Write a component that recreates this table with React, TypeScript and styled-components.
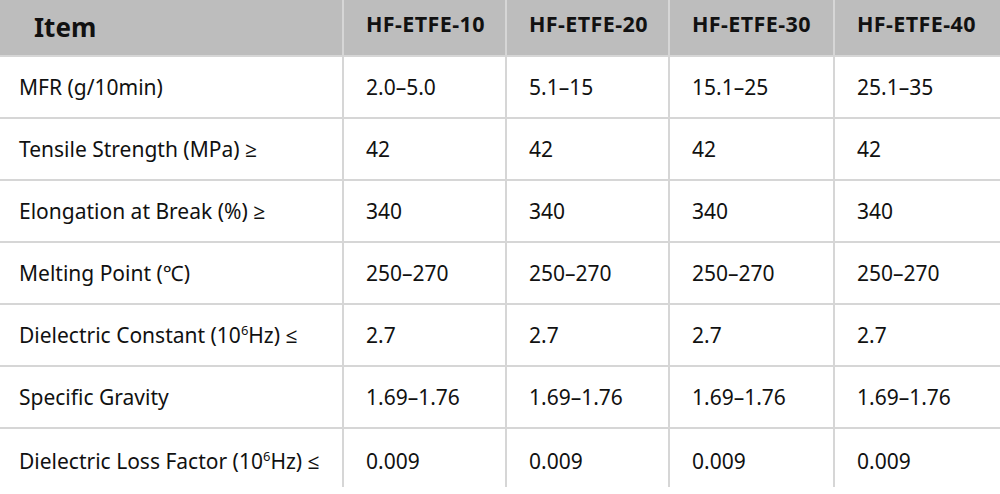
import React from 'react';
import styled, {createGlobalStyle} from 'styled-components';

const GlobalStyle = createGlobalStyle`
  html, body {
    margin: 0;
    padding: 0;
    background: #ffffff;
  }
`;

const Table = styled.div`
  display: grid;
  grid-template-columns: 344px 163px 163px 165px 1fr;
  grid-template-rows: 57px repeat(6, 62px) 65px;
  width: 1000px;
  height: 494px;
  overflow: hidden;
  font-family: 'Noto Sans', 'Open Sans', sans-serif;
  color: #111111;
  background: #ffffff;
`;

const HeadCell = styled.div<{$first?: boolean; $last?: boolean}>`
  display: flex;
  align-items: center;
  box-sizing: border-box;
  background: #bdbdbd;
  border-bottom: 2px solid #d6d6d6;
  border-right: ${p => (p.$last ? 'none' : '2px solid #d6d6d6')};
  padding-left: ${p => (p.$first ? '34px' : '22px')};
  padding-bottom: ${p => (p.$first ? '2px' : '8px')};
  font-weight: 700;
  font-size: ${p => (p.$first ? '26px' : '21.5px')};
  letter-spacing: ${p => (p.$first ? '0' : '0.4px')};
  color: #111111;
  white-space: nowrap;
`;

const Cell = styled.div<{$first?: boolean; $last?: boolean; $end?: boolean}>`
  display: flex;
  align-items: center;
  box-sizing: border-box;
  border-bottom: ${p => (p.$end ? 'none' : '2px solid #d6d6d6')};
  border-right: ${p => (p.$last ? 'none' : '2px solid #d6d6d6')};
  padding-left: ${p => (p.$first ? '19px' : '22px')};
  padding-top: ${p => (p.$end ? '6px' : '0')};
  margin-bottom: ${p => (p.$end ? '7px' : '0')};
  font-size: 21px;
  white-space: nowrap;
`;

const Label = styled.span`
  white-space: nowrap;
`;

const Sup = styled.span`
  display: inline-block;
  font-size: 13px;
  line-height: 1;
  vertical-align: baseline;
  position: relative;
  top: -8px;
`;

const headers = ['HF-ETFE-10', 'HF-ETFE-20', 'HF-ETFE-30', 'HF-ETFE-40'];

const rows: {label: React.ReactNode; value: string}[] = [
  {label: 'MFR (g/10min)', value: ''},
  {label: 'Tensile Strength (MPa) ≥', value: '42'},
  {label: 'Elongation at Break (%) ≥', value: '340'},
  {label: 'Melting Point (℃)', value: '250–270'},
  {
    label: (
      <Label>
        Dielectric Constant (10<Sup>6</Sup>Hz) ≤
      </Label>
    ),
    value: '2.7'
  },
  {label: 'Specific Gravity', value: '1.69–1.76'},
  {
    label: (
      <Label>
        Dielectric Loss Factor (10<Sup>6</Sup>Hz) ≤
      </Label>
    ),
    value: '0.009'
  }
];

const mfr = ['2.0–5.0', '5.1–15', '15.1–25', '25.1–35'];

const App = () => (
  <>
    <GlobalStyle />
    <Table>
      <HeadCell $first>Item</HeadCell>
      {headers.map((h, i) => (
        <HeadCell key={h} $last={i === headers.length - 1}>
          {h}
        </HeadCell>
      ))}
      {rows.map((row, r) => {
        const end = r === rows.length - 1;
        return (
          <React.Fragment key={r}>
            <Cell $first $end={end}>
              {row.label}
            </Cell>
            {headers.map((h, i) => (
              <Cell key={h} $last={i === headers.length - 1} $end={end}>
                {r === 0 ? mfr[i] : row.value}
              </Cell>
            ))}
          </React.Fragment>
        );
      })}
    </Table>
  </>
);

export default App;
